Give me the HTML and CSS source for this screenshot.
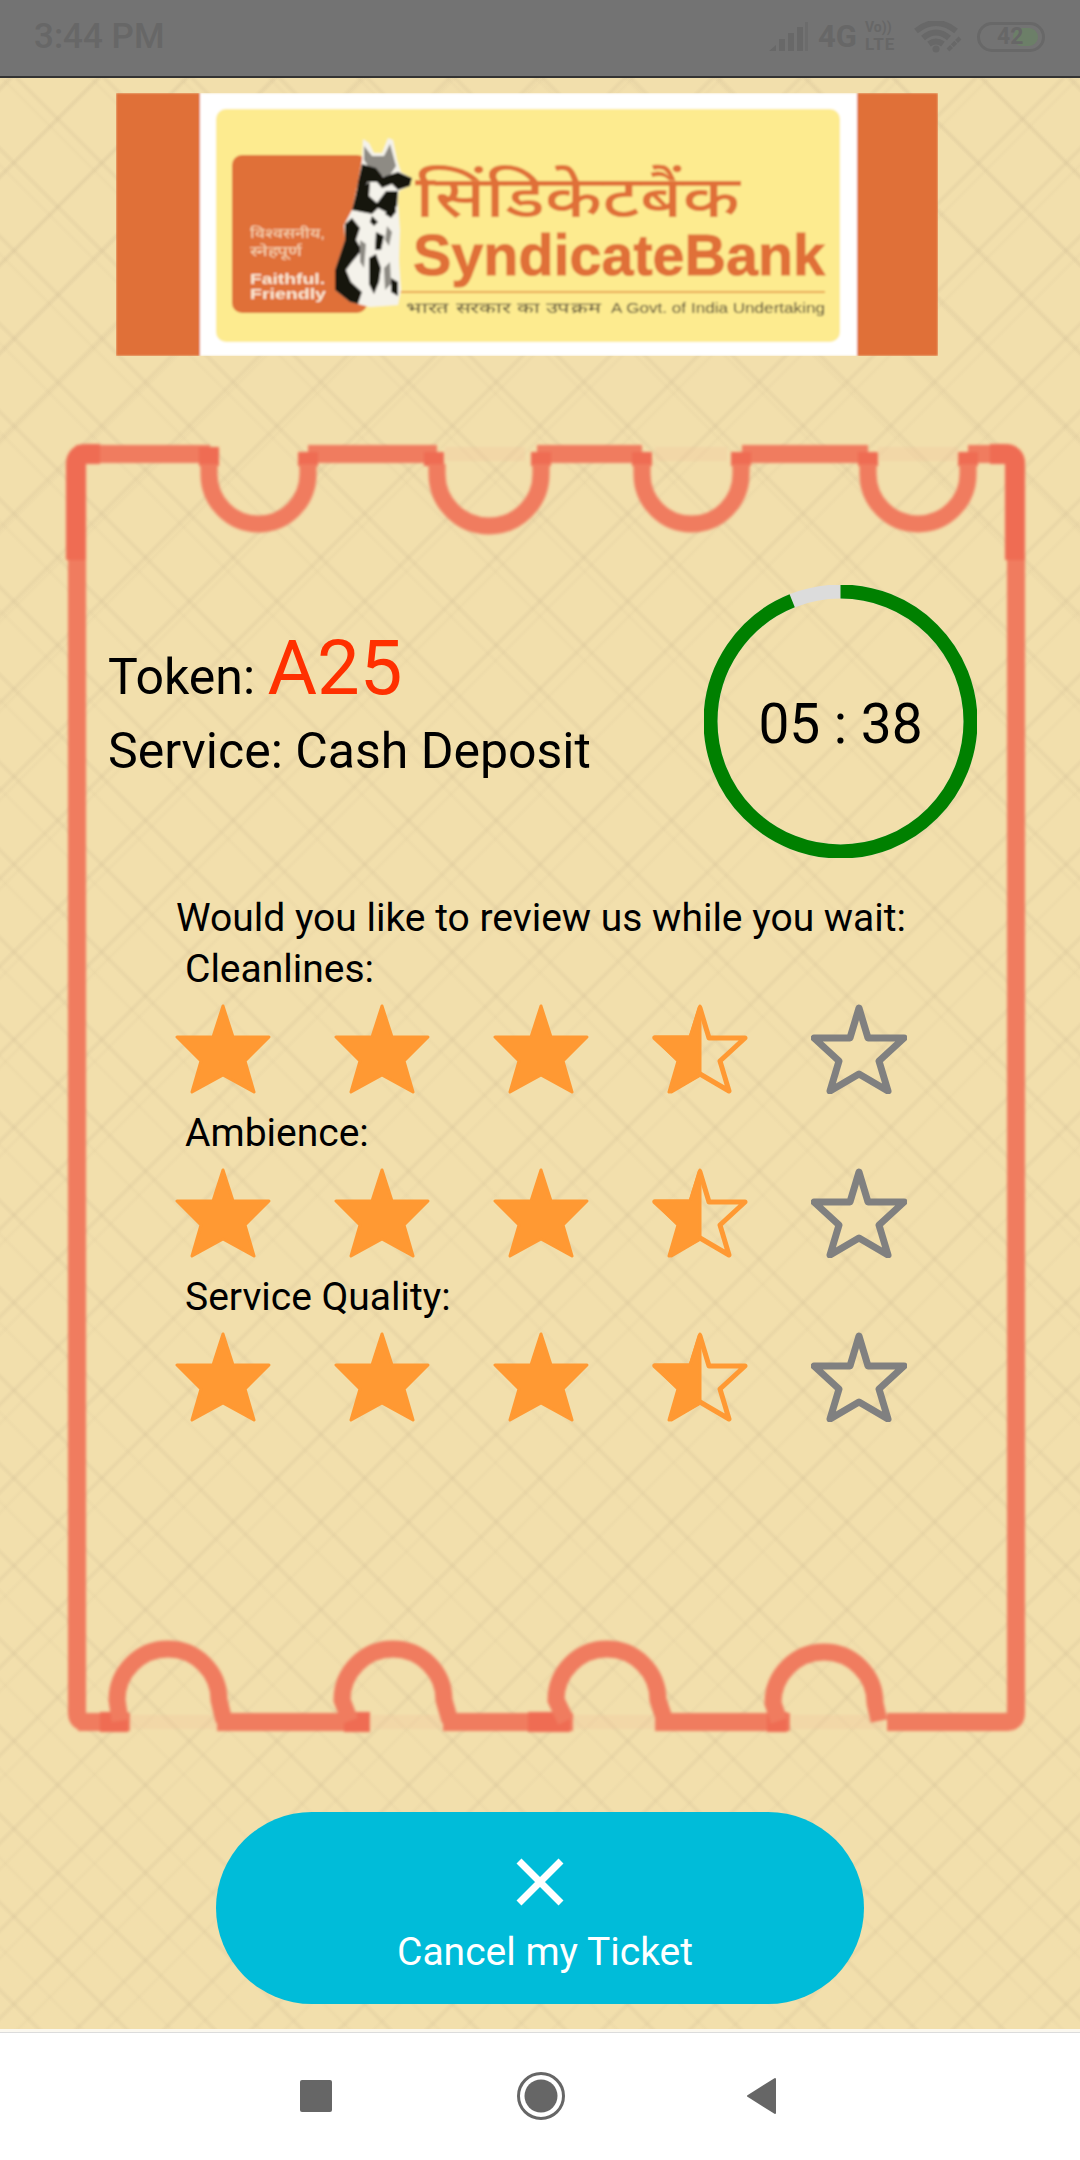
FILE: index.html
```html
<!DOCTYPE html>
<html lang="en">
<head>
<meta charset="utf-8">
<title>Ticket</title>
<link rel="stylesheet" href="styles.css">
</head>
<body>
<svg class="defs" width="0" height="0" aria-hidden="true">
  <defs>
    <symbol id="star-full" viewBox="0 0 96 90"><polygon class="st-full" points="48,2 58,33 94,33 70,57 79,88 48,71 17,88 26,57 2,33 38,33"/></symbol>
    <symbol id="star-half" viewBox="0 0 96 90"><polygon class="st-half-line" points="48,4 57,34 93,34 68,57 77,87 48,70 19,87 28,57 3,34 39,34"/><polygon class="st-full" points="48,2 38,33 2,33 26,57 17,88 48,71"/></symbol>
    <symbol id="star-empty" viewBox="0 0 96 90"><polygon class="st-empty" points="48,4 57,34 93,34 68,57 77,87 48,70 19,87 28,57 3,34 39,34"/></symbol>
  </defs>
</svg>
<div class="phone">
  <header class="status">
    <span class="time">3:44 PM</span>
    <div class="status-icons">
      <svg class="sig" width="39" height="30" viewBox="0 0 39 30"><path class="si" d="M0 29 L7 23 V29Z"/><rect class="si" x="10" y="17" width="6" height="12"/><rect class="si" x="19" y="11" width="6" height="18"/><rect class="si" x="28" y="5" width="6" height="24"/><rect class="si-dim" x="36" y="0" width="3" height="29"/></svg>
      <span class="net">4G</span>
      <span class="volte"><span class="vo">Vo))</span><span class="lte">LTE</span></span>
      <svg class="wifi" width="48" height="32" viewBox="0 0 48 32"><path class="si-line" d="M2 10 Q22 -6 42 10"/><path class="si-line" d="M9 17 Q22 6 35 17"/><path class="si-line" d="M15 23 Q22 18 29 23"/><circle class="si" cx="22" cy="28" r="3.5"/><path class="si-thin" d="M34 29 L46 17"/></svg>
      <span class="battery"><span class="bat-fill"></span><span class="bat-num">42</span></span>
    </div>
  </header>

  <main class="main">
    <svg class="logo" viewBox="116 93 822 263" width="822" height="263" role="img" aria-label="Syndicate Bank">
      <defs><filter id="lb" x="-5%" y="-5%" width="110%" height="110%"><feGaussianBlur stdDeviation="0.9"/></filter></defs>
      <g filter="url(#lb)">
        <rect class="lg-orange" x="116" y="93" width="822" height="263"/>
        <rect class="lg-white" x="200" y="93" width="657" height="263"/>
        <rect class="lg-yellow" x="216" y="109" width="624" height="233" rx="10"/>
        <rect class="lg-orange" x="232" y="155" width="135" height="158" rx="10"/>
        <text class="lg-hi" x="415" y="217" textLength="325" lengthAdjust="spacingAndGlyphs">सिंडिकेटबैंक</text>
        <text class="lg-en" x="413" y="275" textLength="412" lengthAdjust="spacingAndGlyphs">SyndicateBank</text>
        <rect class="lg-rule" x="400" y="291" width="425" height="2"/>
        <text class="lg-tag" x="406" y="313" textLength="195" lengthAdjust="spacingAndGlyphs">भारत सरकार का उपक्रम</text>
        <text class="lg-tag" x="611" y="313" textLength="214" lengthAdjust="spacingAndGlyphs">A Govt. of India Undertaking</text>
        <text class="lg-wh" x="250" y="238" textLength="75" lengthAdjust="spacingAndGlyphs">विश्वसनीय,</text>
        <text class="lg-wh" x="250" y="256" textLength="52" lengthAdjust="spacingAndGlyphs">स्नेहपूर्ण</text>
        <text class="lg-wb" x="250" y="284" textLength="75" lengthAdjust="spacingAndGlyphs">Faithful.</text>
        <text class="lg-wb" x="250" y="299" textLength="76" lengthAdjust="spacingAndGlyphs">Friendly</text>
        <path class="dog-w" d="M363 139 L369 143 L374 153 L382 153 L388 138 L393 140 L397 160 L401 172 L412 178 L410 186 L399 191 L398 202 L400 230 L399 260 L401 290 L398 305 L370 307 L350 302 L335 290 L335 270 L345 240 L344 225 L352 210 L357 187 L362 160Z"/>
        <path class="dog-g" d="M364 146 L372 156 L384 156 L390 144 L396 166 L388 178 L372 172 L364 160Z"/>
        <path class="dog-b" d="M362 164 L376 168 L383 177 L398 172 L412 178 L410 186 L398 190 L392 184 L382 188 L377 182 L368 182 L356 196 L358 182Z"/>
        <path class="dog-b" d="M357 190 L370 182 L369 196 L377 203 L386 191 L398 191 L397 206 L388 213 L378 208 L372 214 L362 212 L352 210Z"/>
        <path class="dog-b" d="M385 214 L395 200 L396 212 L391 218Z"/>
        <path class="dog-b" d="M345 224 L352 218 L360 228 L356 240 L362 250 L352 262 L346 270 L351 282 L362 292 L358 304 L350 302 L335 290 L335 270 L345 240Z"/>
        <path class="dog-b" d="M372 216 L378 222 L374 226 L370 222Z"/>
        <path class="dog-b" d="M376 232 L384 236 L381 250 L375 250Z"/>
        <path class="dog-b" d="M369 258 L376 254 L381 268 L379 282 L374 294 L369 284Z"/>
        <path class="dog-g" d="M387 226 L392 232 L389 246 L385 240Z"/>
        <path class="dog-g" d="M384 268 L390 262 L391 284 L385 290Z"/>
        <path class="dog-b" d="M391 278 L398 282 L398 296 L391 292Z"/>
        <path class="dog-g" d="M360 240 L366 244 L364 268 L360 262Z"/>
      </g>
    </svg>

    <section class="ticket">
      <svg class="ticket-art" viewBox="0 440 1080 1300" width="1080" height="1300" aria-hidden="true">
        <defs><filter id="tb" x="-2%" y="-2%" width="104%" height="104%"><feGaussianBlur stdDeviation="1.5"/></filter></defs>
        <g filter="url(#tb)">
          <path class="tk-faint" d="M445 454H525M655 454H727M878 454H958M130 1722H217M360 1722H445M573 1722H655M792 1722H884"/>
          <path class="tk" d="M78 1722 H130 M77 560 V1713 Q77 1722 86 1722 H100"/>
          <path class="tk" d="M1016 560 V1713 Q1016 1722 1007 1722 H887"/>
          <path class="tk" d="M76 454 H210 M308 454 H437 M537 454 H642 M742 454 H868 M968 454 H1006 Q1016 454 1016 464"/>
          <path class="tk" d="M217 1722 H358 M443 1722 H573 M655 1722 H790"/>
          <path class="tk-dark" d="M76 560 V464 Q76 454 86 454 H100"/>
          <path class="tk-dark" d="M1015 560 V464 Q1015 454 1005 454 H990"/>
          <path class="tk-dark" d="M209 447 V466 M308 452 V466 M434 452 V466 M541 452 V466 M642 452 V466 M741 452 V466 M868 452 V466 M968 452 V466"/>
          <path class="tk-dark" d="M100 1722 H128 M344 1722 H370 M528 1722 H570 M767 1722 H787"/>
          <path class="tk-arc" d="M209 464 V474 A49.5 50 0 0 0 308 474 V464"/>
          <path class="tk-arc" d="M437 464 V474 A52 52 0 0 0 541 474 V464"/>
          <path class="tk-arc" d="M642 464 V474 A49.5 50 0 0 0 741 474 V464"/>
          <path class="tk-arc" d="M868 464 V474 A50 50 0 0 0 968 474 V464"/>
          <path class="tk-arc" d="M120 1721 L117 1700 A51 51 0 0 1 219 1700 L224 1721"/>
          <path class="tk-arc" d="M350 1721 L342 1700 A51 51 0 0 1 444 1700 L450 1721"/>
          <path class="tk-arc" d="M566 1721 L556 1700 A51 51 0 0 1 658 1700 L665 1721"/>
          <path class="tk-arc" d="M779 1721 L773 1703 A51 51 0 0 1 875 1703 L879 1721"/>
        </g>
      </svg>

      <div class="ticket-top">
        <div class="info">
          <p class="info-line">Token: <span class="token">A25</span></p>
          <p class="info-line">Service: Cash Deposit</p>
        </div>
        <div class="timer">
          <svg class="timer-ring" viewBox="0 0 273 273" width="273" height="273" aria-hidden="true">
            <circle class="ring-bg" cx="136.5" cy="136.5" r="130"/>
            <circle class="ring-fg" cx="136.5" cy="136.5" r="130" transform="rotate(-90 136.5 136.5)"/>
          </svg>
          <span class="timer-text">05 : 38</span>
        </div>
      </div>

      <div class="review">
        <p class="review-title">Would you like to review us while you wait:</p>
        <div class="group">
          <p class="group-label">Cleanlines:</p>
          <div class="stars">
            <svg class="star"><use href="#star-full"/></svg><svg class="star"><use href="#star-full"/></svg><svg class="star"><use href="#star-full"/></svg><svg class="star"><use href="#star-half"/></svg><svg class="star"><use href="#star-empty"/></svg>
          </div>
        </div>
        <div class="group">
          <p class="group-label">Ambience:</p>
          <div class="stars">
            <svg class="star"><use href="#star-full"/></svg><svg class="star"><use href="#star-full"/></svg><svg class="star"><use href="#star-full"/></svg><svg class="star"><use href="#star-half"/></svg><svg class="star"><use href="#star-empty"/></svg>
          </div>
        </div>
        <div class="group">
          <p class="group-label">Service Quality:</p>
          <div class="stars">
            <svg class="star"><use href="#star-full"/></svg><svg class="star"><use href="#star-full"/></svg><svg class="star"><use href="#star-full"/></svg><svg class="star"><use href="#star-half"/></svg><svg class="star"><use href="#star-empty"/></svg>
          </div>
        </div>
      </div>
    </section>

    <button class="cancel" type="button">
      <svg class="cancel-x" width="48" height="48" viewBox="0 0 48 48" aria-hidden="true"><path d="M3 3 L45 45 M45 3 L3 45"/></svg>
      <span>Cancel my Ticket</span>
    </button>
  </main>

  <footer class="nav">
    <span class="nav-square"></span>
    <svg class="nav-home" width="48" height="48" viewBox="0 0 48 48" aria-hidden="true"><circle class="home-ring" cx="24" cy="24" r="22.5"/><circle class="home-dot" cx="24" cy="24" r="16.5"/></svg>
    <svg class="nav-back" width="30" height="38" viewBox="0 0 30 38" aria-hidden="true"><path d="M29 2 V36 L2 19Z"/></svg>
  </footer>
</div>
</body>
</html>
```

FILE: styles.css
```css
* { box-sizing: border-box; }
html, body { margin: 0; padding: 0; }
body { font-family: Roboto, "Noto Sans", sans-serif; color: #000; }
p { margin: 0; }
.defs { position: absolute; }

.phone { width: 1080px; height: 2160px; display: flex; flex-direction: column; overflow: hidden; }

/* Status bar */
.status {
  height: 78px; flex: none; background: #737373; border-bottom: 2px solid #333;
  display: flex; align-items: center; justify-content: space-between;
  padding: 0 35px 3px 34px; color: #676767;
}
.time { font-size: 35px; font-weight: 500; line-height: 40px; }
.status-icons { display: flex; align-items: center; }
.si { fill: #686868; }
.si-dim { fill: #6c6c6c; }
.si-line { fill: none; stroke: #686868; stroke-width: 6; }
.si-thin { stroke: #686868; stroke-width: 4; stroke-dasharray: 5 1; }
.sig { margin-right: 10px; }
.net { font-size: 31px; font-weight: 700; line-height: 32px; margin-right: 8px; }
.volte { display: flex; flex-direction: column; width: 34px; margin-right: 15px; font-weight: 700; line-height: 1; }
.vo { font-size: 14px; height: 16px; }
.lte { font-size: 17px; letter-spacing: 1px; }
.wifi { margin-right: 15px; }
.battery {
  width: 68px; height: 30px; border: 3px solid #686868; border-radius: 15px;
  position: relative; display: flex; align-items: center; padding-left: 17px;
}
.bat-num { position: relative; font-size: 23px; font-weight: 700; line-height: 24px; color: #676767; }
.bat-fill { position: absolute; left: 33px; top: 3px; width: 25px; height: 18px; border-radius: 9px; background: #6c7f68; }

/* Main */
.main {
  flex: 1; display: flex; flex-direction: column; align-items: center; position: relative;
  background-color: #f2dfac;
  background-image:
    repeating-linear-gradient(45deg, transparent 0, transparent 26px, rgba(205,185,145,.2) 29px, rgba(205,185,145,.2) 30px, transparent 33px, transparent 62px),
    repeating-linear-gradient(-45deg, transparent 0, transparent 26px, rgba(205,185,145,.2) 29px, rgba(205,185,145,.2) 30px, transparent 33px, transparent 62px),
    repeating-linear-gradient(45deg, transparent 0, transparent 57px, rgba(205,185,145,.1) 60px, transparent 63px, transparent 62px),
    repeating-linear-gradient(-45deg, transparent 0, transparent 57px, rgba(205,185,145,.1) 60px, transparent 63px, transparent 62px);
  padding: 15px 0 28px;
}
.logo { flex: none; display: block; align-self: flex-start; margin-left: 116px; }
.lg-orange { fill: #e07038; }
.lg-white { fill: #fff; }
.lg-yellow { fill: #fdeb8f; }
.lg-rule { fill: #e9a550; }
.lg-hi { font-family: "Noto Sans", sans-serif; font-size: 58px; font-weight: 500; fill: #e07038; }
.lg-en { font-family: "Liberation Sans", sans-serif; font-size: 58px; font-weight: 700; fill: #e07038; stroke: #e07038; stroke-width: 1; }
.lg-tag { font-family: "Liberation Sans", sans-serif; font-size: 15px; fill: #4b4232; }
.lg-wh { font-family: "Liberation Sans", sans-serif; font-size: 14px; fill: #f6d9b8; }
.lg-wb { font-family: "Liberation Sans", sans-serif; font-size: 14px; font-weight: 700; fill: #fbe9d4; }
.dog-w { fill: #f4f2ea; }
.dog-g { fill: #8e8b84; }
.dog-b { fill: #17130f; }

/* Ticket */
.ticket { position: relative; width: 1080px; height: 1300px; margin-top: 84px; flex: none; }
.ticket-art { position: absolute; left: 0; top: 0; }
.tk, .tk-dark, .tk-arc, .tk-faint { fill: none; }
.tk { stroke: #f07b5f; stroke-width: 18; }
.tk-arc { stroke: #f07b5f; stroke-width: 17; }
.tk-dark { stroke: #ef6c52; stroke-width: 20; }
.tk-faint { stroke: #f2c29a; stroke-width: 14; opacity: .3; }

.ticket-top {
  position: relative; display: flex; justify-content: space-between; align-items: center;
  padding: 145px 103px 0 108px;
}
.info { padding-bottom: 24px; }
.info-line { font-size: 50px; line-height: 74px; }
.token { font-size: 76px; color: #ff3000; line-height: 74px; }
.timer { position: relative; width: 273px; height: 273px; display: flex; align-items: center; justify-content: center; padding-top: 5px; }
.timer-ring { position: absolute; left: 0; top: 0; }
.ring-bg, .ring-fg { fill: none; stroke-width: 14; }
.ring-bg { stroke: #dcdcdc; }
.ring-fg { stroke: #008000; stroke-dasharray: 767 817; }
.timer-text { position: relative; font-size: 55px; line-height: 64px; }

.review { position: relative; padding: 34px 0 0 176px; }
.review-title { font-size: 39px; line-height: 52px; }
.group-label { font-size: 39px; line-height: 50px; padding-left: 9px; }
.stars { display: flex; gap: 63px; padding-top: 10px; height: 114px; margin-left: -1px; }
.star { width: 96px; height: 90px; flex: none; overflow: visible; }
.st-full { fill: #ff9933; stroke: #ff9933; stroke-width: 3; stroke-linejoin: round; }
.st-half-line { fill: none; stroke: #ff9933; stroke-width: 5; stroke-linejoin: round; }
.st-empty { fill: none; stroke: #808080; stroke-width: 7; stroke-linejoin: round; }

/* Cancel */
.cancel {
  position: relative; width: 648px; height: 192px; margin-top: auto; flex: none;
  border: 0; border-radius: 96px; background: #00bcd9; color: #fff;
  font-family: Roboto, sans-serif; font-size: 39px; padding: 0 0 0 10px;
  display: flex; flex-direction: column; align-items: center; justify-content: flex-start;
}
.cancel-x { margin: 46px 10px 0 0; }
.cancel-x path { fill: none; stroke: #fff; stroke-width: 7; }
.cancel span { line-height: 44px; margin-top: 24px; }

/* Nav */
.nav {
  position: relative; height: 128px; flex: none; background: #fff; border-top: 1px solid #dcdcdc;
  box-shadow: 0 -3px 0 #fbf8f0;
  display: flex; align-items: center; justify-content: center; gap: 185px; padding: 0 4px 1px 0;
}
.nav-square { width: 32px; height: 32px; background: #666; border-radius: 2px; }
.nav-back { margin-left: -4px; }
.home-ring { fill: none; stroke: #666; stroke-width: 3; }
.home-dot { fill: #666; }
.nav-back path { fill: #666; stroke: #666; stroke-width: 2; stroke-linejoin: round; }
```
